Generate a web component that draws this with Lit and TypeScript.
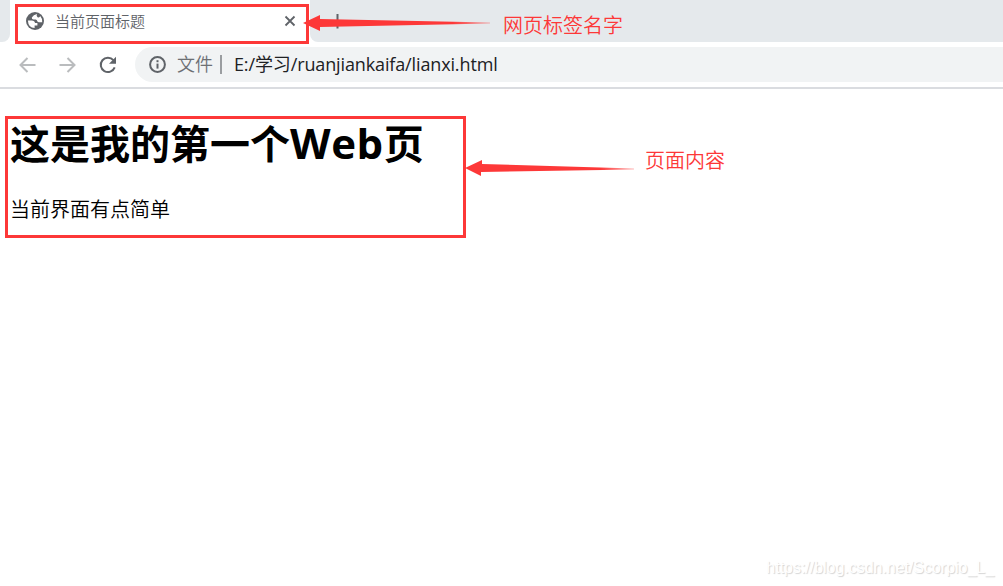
import { LitElement, css, html } from 'lit'
import { customElement, property } from 'lit/decorators.js'

@customElement('browser-tabs')
export class BrowserTabs extends LitElement {
  @property()
  title = ''

  static styles = css`
    :host {
      display: flex;
      height: 42px;
      background: #fff;
    }

    .previous {
      width: 10px;
      background: #e5e9ec;
      border-bottom-right-radius: 8px;
    }

    .tab {
      box-sizing: border-box;
      display: flex;
      align-items: center;
      width: 300px;
      padding: 0 14px 0 15px;
      background: #fff;
      color: #5f6368;
      font-size: 15px;
    }

    .title {
      flex: 1;
      padding-left: 10px;
      font-weight: 350;
      line-height: 42px;
    }

    .strip {
      flex: 1;
      padding: 13px 0 0 19px;
      background: #e5e9ec;
      border-bottom-left-radius: 8px;
    }

    svg {
      display: block;
    }
  `

  render() {
    return html`
      <div class="previous"></div>
      <div class="tab">
        <svg width="20" height="20" viewBox="0 0 20 20">
          <circle cx="10" cy="10" r="9" fill="#5f6368" />
          <path
            d="M12 3 Q8.4 3.8 6.8 6.4 Q6.6 8.2 8.6 8.4 H10.6 Q12 8.6 12.2 10 Q12.6 11.3 14.4 11.2 H17.2 Q17.6 7.6 15.2 5 Q14.6 7 12.6 6.2 Q11 5 12 3 Z"
            fill="#fff"
          />
          <path
            d="M2.9 9.4 H6.6 Q9.8 9.6 10 12 H12.4 V14.6 H9.6 V17.1 Q3.2 16.6 2.9 9.4 Z"
            fill="#fff"
          />
        </svg>
        <span class="title">${this.title}</span>
        <svg width="12" height="12" viewBox="0 0 12 12">
          <path d="M1.5 1.5 L10.5 10.5 M10.5 1.5 L1.5 10.5" stroke="#5f6368" stroke-width="1.8" />
        </svg>
      </div>
      <div class="strip">
        <svg width="17" height="17" viewBox="0 0 17 17">
          <path d="M8.5 1 V15.5 M1.5 8.5 H15.5" stroke="#5f6368" stroke-width="2" />
        </svg>
      </div>
    `
  }
}

@customElement('address-bar')
export class AddressBar extends LitElement {
  @property()
  scheme = ''

  @property()
  url = ''

  static styles = css`
    :host {
      box-sizing: border-box;
      display: flex;
      align-items: center;
      height: 47px;
      border-bottom: 2px solid #dadce0;
      padding-left: 18px;
      background: #fff;
    }

    svg {
      flex: none;
      display: block;
      fill: none;
      stroke: #5f6368;
      stroke-width: 2;
    }

    .nav {
      display: flex;
      gap: 20px;
      width: 117px;
    }

    .disabled {
      stroke: #babcbe;
    }

    .reload .head,
    .info .dot {
      fill: #5f6368;
      stroke: none;
    }

    .field {
      flex: 1;
      display: flex;
      align-items: center;
      height: 35px;
      padding-left: 13px;
      border-radius: 18px 0 0 18px;
      background: #f1f3f4;
      font-size: 18px;
      line-height: 35px;
      white-space: nowrap;
    }

    .scheme {
      width: 36px;
      margin-left: 10px;
      color: #6d7074;
      font-weight: 350;
    }

    .divider {
      width: 2px;
      height: 19px;
      margin: 0 12px 0 7px;
      background: #9a9da0;
    }

    .url {
      color: #202124;
      letter-spacing: -0.13px;
    }
  `

  render() {
    return html`
      <div class="nav">
        <svg class="disabled" width="20" height="20" viewBox="0 0 20 20">
          <path d="M17.5 10 H3 M9.5 3 L2.5 10 L9.5 17" />
        </svg>
        <svg class="disabled" width="20" height="20" viewBox="0 0 20 20">
          <path d="M1.5 10 H16 M9.5 3 L16.5 10 L9.5 17" />
        </svg>
        <svg class="reload" width="20" height="20" viewBox="0 0 20 20">
          <path d="M16.7 12.4 A7.2 7.2 0 1 1 15.4 5.1" />
          <path class="head" d="M18 1.8 V8.8 H11 Z" />
        </svg>
      </div>
      <div class="field">
        <svg class="info" width="19" height="19" viewBox="0 0 19 19">
          <circle cx="9.5" cy="9.5" r="7.4" />
          <path d="M9.5 8.6 V13.6" />
          <rect class="dot" x="8.5" y="5.2" width="2" height="2" />
        </svg>
        <span class="scheme">${this.scheme}</span>
        <span class="divider"></span>
        <span class="url">${this.url}</span>
      </div>
    `
  }
}

@customElement('app-root')
export class AppRoot extends LitElement {
  static styles = css`
    :host {
      position: relative;
      display: flex;
      flex-direction: column;
      height: 586px;
      overflow: hidden;
      background: #fff;
      font-family: 'Open Sans', 'Noto Sans CJK SC', sans-serif;
    }

    main {
      flex: 1;
      padding: 28px 10px 0;
      color: #000;
    }

    h1 {
      height: 54px;
      margin: 0;
      font-size: 40px;
      line-height: 54px;
      font-weight: 700;
    }

    .latin {
      font-size: 42px;
      line-height: 1;
      letter-spacing: 0.6px;
    }

    p {
      margin: 25px 0 0;
      font-size: 20px;
      line-height: 28px;
      font-weight: 350;
    }

    /* annotations drawn over the window */
    .frame {
      position: absolute;
      box-sizing: border-box;
      border: 3px solid #fd3838;
    }

    .frame.tab {
      left: 15px;
      top: 4px;
      width: 294px;
      height: 40px;
    }

    .frame.content {
      left: 5px;
      top: 116px;
      width: 461px;
      height: 122px;
    }

    .arrows {
      position: absolute;
      inset: 0;
    }

    .note {
      position: absolute;
      color: #fd3838;
      font-size: 20px;
      line-height: 28px;
      font-weight: 350;
      white-space: nowrap;
    }

    .note.tab {
      left: 503px;
      top: 12px;
    }

    .note.content {
      left: 645px;
      top: 147px;
    }

    .watermark {
      position: absolute;
      right: 9px;
      bottom: 9px;
      color: #fff;
      font-family: 'Liberation Sans', sans-serif;
      font-size: 16px;
      line-height: 18px;
      letter-spacing: -0.03px;
      text-shadow: 1px 1px 1px #d4d4d4;
    }
  `

  render() {
    return html`
      <browser-tabs title="当前页面标题"></browser-tabs>
      <address-bar scheme="文件" url="E:/学习/ruanjiankaifa/lianxi.html"></address-bar>
      <main>
        <h1>这是我的第一个<span class="latin">Web</span>页</h1>
        <p>当前界面有点简单</p>
      </main>
      <div class="frame tab"></div>
      <div class="frame content"></div>
      <svg class="arrows" width="1003" height="586">
        <defs>
          <linearGradient id="fade" x1="0" x2="1" y1="0" y2="0">
            <stop offset="0.8" stop-color="#fd3838" />
            <stop offset="1" stop-color="#fd3838" stop-opacity="0.35" />
          </linearGradient>
        </defs>
        <path fill="url(#fade)" d="M303 23 L320 15 V19 L490 22.4 V23.6 L320 27 V31 Z" />
        <path fill="url(#fade)" d="M465 168 L482 160 V164 L634 168.4 V169.4 L481 172 V176 Z" />
      </svg>
      <span class="note tab">网页标签名字</span>
      <span class="note content">页面内容</span>
      <span class="watermark">https://blog.csdn.net/Scorpio_L_</span>
    `
  }
}
